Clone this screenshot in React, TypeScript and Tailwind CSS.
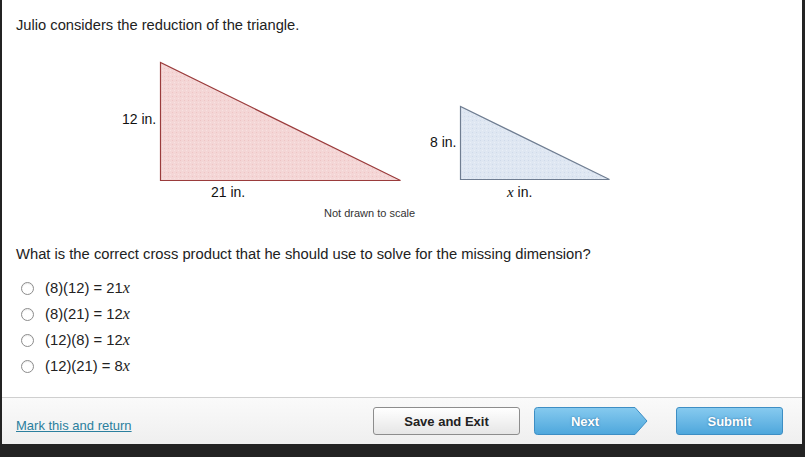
import React from "react";

const font = { fontFamily: '"Liberation Sans", Arial, sans-serif' };

function Figure() {
  return (
    <svg width="800" height="175" viewBox="2 50 800 175" className="block">
      <defs>
        <pattern id="pinkdots" width="4" height="4" patternUnits="userSpaceOnUse">
          <rect width="4" height="4" fill="#f4d6d6" />
          <rect x="0" y="0" width="1" height="1" fill="#eec4c4" />
          <rect x="2" y="2" width="1" height="1" fill="#f8e2e2" />
        </pattern>
        <pattern id="bluedots" width="4" height="4" patternUnits="userSpaceOnUse">
          <rect width="4" height="4" fill="#dfe7f2" />
          <rect x="0" y="0" width="1" height="1" fill="#cfdaea" />
          <rect x="2" y="2" width="1" height="1" fill="#e9eff7" />
        </pattern>
      </defs>
      <polygon points="160.5,62.5 160.5,180.5 400.5,180.5" fill="url(#pinkdots)" stroke="#9a3b3b" strokeWidth="1.2" />
      <polygon points="460.5,106.5 460.5,179.5 609.5,179.5" fill="url(#bluedots)" stroke="#6f7d91" strokeWidth="1.2" />
      <g fontFamily='"Liberation Sans", Arial, sans-serif' fontSize="14" fill="#111">
        <text x="122" y="124">12 in.</text>
        <text x="211" y="197">21 in.</text>
        <text x="430" y="147">8 in.</text>
        <text x="507" y="197"><tspan fontStyle="italic" fontFamily='"Liberation Serif", "Times New Roman", serif' fontSize="15">x</tspan> in.</text>
        <text x="324" y="217" fontSize="11" fill="#333">Not drawn to scale</text>
      </g>
    </svg>
  );
}

function Option({ left, coef }: { left: string; coef: string }) {
  return (
    <label className="flex items-center h-[26px]">
      <span className="ml-[5px] w-[13px] h-[13px] rounded-full border border-[#8c8c8c] bg-white shadow-[inset_0_1px_1px_rgba(0,0,0,0.08)]" />
      <span className="ml-[11px] text-[14.8px] text-[#222]">
        {left} = {coef}
        <span className="italic" style={{ fontFamily: '"Liberation Serif", "Times New Roman", serif', fontSize: 16 }}>x</span>
      </span>
    </label>
  );
}

export default function App() {
  return (
    <div className="w-[805px] h-[457px] bg-[#232323] overflow-hidden" style={font}>
      <div className="ml-[2px] w-[800px] flex flex-col">
        <div className="bg-white h-[397px] flex flex-col">
          <p className="pt-[15px] pl-[14px] text-[14.7px] leading-[20px] text-[#222]">
            Julio considers the reduction of the triangle.
          </p>
          <div className="mt-[15px]">
            <Figure />
          </div>
          <p className="mt-[19px] pl-[14px] text-[14.75px] leading-[20px] text-[#222]">
            What is the correct cross product that he should use to solve for the missing dimension?
          </p>
          <div className="mt-[11px] pl-[14px] flex flex-col">
            <Option left="(8)(12)" coef="21" />
            <Option left="(8)(21)" coef="12" />
            <Option left="(12)(8)" coef="12" />
            <Option left="(12)(21)" coef="8" />
          </div>
        </div>
        <div className="h-[47px] border-t border-[#cfcfcf] bg-gradient-to-b from-[#fafafa] to-[#efefef] flex items-center pl-[14px] pr-[19px]">
          <a className="text-[13px] text-[#2b7f9e] underline mt-[10px]">Mark this and return</a>
          <div className="ml-auto flex items-center gap-0">
            <button className="w-[147px] h-[28px] rounded-[3px] border border-[#8d8d8d] bg-gradient-to-b from-[#ffffff] to-[#e6e6e6] text-[13px] font-bold text-[#222] pt-[1px]">
              Save and Exit
            </button>
            <button className="relative ml-[14px] w-[114px] h-[28px] text-[13px] font-bold text-white [text-shadow:0_0_2px_rgba(0,60,110,0.6)] pt-[1px]">
              <svg className="absolute inset-0" width="114" height="28" viewBox="0 0 114 28">
                <defs>
                  <linearGradient id="nextg" x1="0" y1="0" x2="0" y2="1">
                    <stop offset="0" stopColor="#86caef" />
                    <stop offset="1" stopColor="#4ea7dc" />
                  </linearGradient>
                </defs>
                <path d="M3.5 0.5 H101 L113 14 L101 27.5 H3.5 Q0.5 27.5 0.5 24.5 V3.5 Q0.5 0.5 3.5 0.5 Z" fill="url(#nextg)" stroke="#3d8ec4" />
              </svg>
              <span className="relative -ml-[12px]">Next</span>
            </button>
            <button className="ml-[28px] w-[107px] h-[28px] rounded-[3px] border border-[#3d8ec4] bg-gradient-to-b from-[#86caef] to-[#4ea7dc] text-[13px] font-bold text-white [text-shadow:0_0_2px_rgba(0,60,110,0.6)] pt-[1px]">
              Submit
            </button>
          </div>
        </div>
      </div>
    </div>
  );
}
